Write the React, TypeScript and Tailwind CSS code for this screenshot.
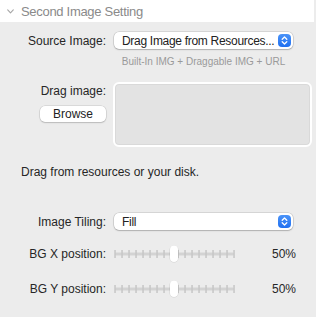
import React from "react";

function Stepper() {
  return (
    <div className="w-[13px] h-[13px] shrink-0 rounded-[4px] bg-gradient-to-b from-[#4a93f8] to-[#1f6ff0] flex items-center justify-center mr-[1px]">
      <svg width="7" height="9" viewBox="0 0 7 9" fill="none" stroke="white" strokeWidth="1.3" strokeLinecap="round" strokeLinejoin="round">
        <polyline points="1.2,3.2 3.5,1 5.8,3.2" />
        <polyline points="1.2,5.8 3.5,8 5.8,5.8" />
      </svg>
    </div>
  );
}

function Popup({ text }: { text: string }) {
  return (
    <div className="w-[179px] h-[17px] bg-white rounded-[5px] shadow-[0_0_0_0.5px_rgba(0,0,0,0.18),0_1px_1.5px_rgba(0,0,0,0.18)] flex items-center justify-between pl-[8px] pr-[1px]">
      <span className="text-[12px] text-[#222] leading-none whitespace-nowrap tracking-[-0.3px]">{text}</span>
      <Stepper />
    </div>
  );
}

function Slider() {
  const ticks = Array.from({ length: 18 }, (_, i) => 1 + i * 7);
  return (
    <svg width="121" height="18" viewBox="0 0 121 18">
      <rect x="1" y="7.5" width="119" height="3" rx="1.5" fill="#d3d3d3" />
      {ticks.map((x) => (
        <rect key={x} x={x - 0.7} y="5" width="1.5" height="8" fill="#c6c6c6" />
      ))}
      <rect x="55.5" y="0.5" width="9" height="17" rx="4.5" fill="#000" opacity="0.12" />
      <rect x="56" y="0.5" width="8" height="16.5" rx="4" fill="#ffffff" />
    </svg>
  );
}

function Label({ children }: { children: React.ReactNode }) {
  return <div className="w-[106px] text-right text-[12px] text-[#262626] leading-[14px] whitespace-nowrap">{children}</div>;
}

export default function App() {
  return (
    <div
      className="w-[316px] h-[317px] bg-[#ececec] overflow-hidden"
      style={{ fontFamily: '"Liberation Sans", Arial, sans-serif' }}
    >
      <div className="h-[22px] w-[314px] bg-white flex items-center pl-[7px] gap-[7px]">
        <svg width="7" height="5" viewBox="0 0 7 5" fill="none" stroke="#a6a6a6" strokeWidth="1.1" strokeLinecap="round" strokeLinejoin="round">
          <polyline points="0.7,0.8 3.5,3.8 6.3,0.8" />
        </svg>
        <span className="text-[13px] text-[#8a8a8a] leading-none tracking-[-0.3px]">Second Image Setting</span>
      </div>

      <div className="mt-[10px] flex items-center gap-[8px]">
        <Label>Source Image:</Label>
        <Popup text="Drag Image from Resources..." />
      </div>

      <div className="mt-[7px] ml-[114px] w-[179px] text-center text-[10px] leading-[12px] text-[#9a9a9a] whitespace-nowrap">
        Built-In IMG + Draggable IMG + URL
      </div>

      <div className="mt-[14px] flex gap-[7px]">
        <div className="w-[106px] flex flex-col items-end">
          <div className="pt-[2px] text-[12px] text-[#262626] leading-[14px]">Drag image:</div>
          <div className="mt-[8px] w-[66px] h-[16px] bg-white rounded-[5px] shadow-[0_0_0_0.5px_rgba(0,0,0,0.15),0_1px_1.5px_rgba(0,0,0,0.15)] flex items-center justify-center text-[12px] text-[#222] leading-none">
            Browse
          </div>
        </div>
        <div className="w-[199px] h-[65px] rounded-[6px] border-2 border-white bg-[#e3e3e3] shadow-[inset_0_0_0_1px_#d9d9d9]" />
      </div>

      <div className="mt-[18px] pl-[21px] text-[12px] text-[#262626] leading-[14px]">
        Drag from resources or your disk.
      </div>

      <div className="mt-[34px] flex items-center gap-[8px]">
        <Label>Image Tiling:</Label>
        <Popup text="Fill" />
      </div>

      <div className="mt-[15px] flex items-center h-[18px] pr-[20px]">
        <Label>BG X position:</Label>
        <div className="ml-[8px]">
          <Slider />
        </div>
        <div className="ml-auto text-[12px] text-[#262626] leading-none">50%</div>
      </div>

      <div className="mt-[17px] flex items-center h-[18px] pr-[20px]">
        <Label>BG Y position:</Label>
        <div className="ml-[8px]">
          <Slider />
        </div>
        <div className="ml-auto text-[12px] text-[#262626] leading-none">50%</div>
      </div>
    </div>
  );
}
